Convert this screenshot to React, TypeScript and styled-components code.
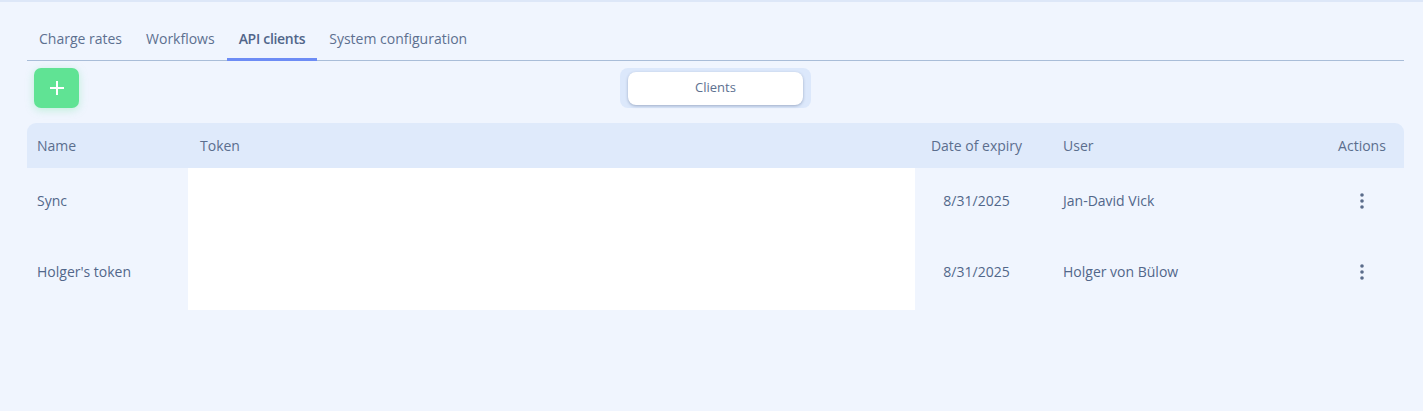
import React from "react";
import styled, { createGlobalStyle } from "styled-components";

const Global = createGlobalStyle`
  html, body { margin: 0; padding: 0; }
  body {
    background: #f0f5fe;
    font-family: "Open Sans", "Noto Sans", sans-serif;
    color: #56698a;
  }
  * { box-sizing: border-box; }
`;

const Page = styled.div`
  min-height: 411px;
  border-top: 2px solid #dde7f8;
  padding: 16px 19px 0 27px;
`;

const TabBar = styled.nav`
  display: flex;
  border-bottom: 1px solid #a9bdd8;
`;

const Tab = styled.div<{ $active?: boolean }>`
  position: relative;
  padding: 11px 12px 11px;
  font-size: 14px;
  line-height: 20px;
  font-weight: ${(p) => (p.$active ? 600 : 400)};
  letter-spacing: ${(p) => (p.$active ? "-0.3px" : "0")};
  color: ${(p) => (p.$active ? "#51668a" : "#5d7090")};
  &::after {
    content: "";
    display: ${(p) => (p.$active ? "block" : "none")};
    position: absolute;
    left: 0;
    right: 0;
    bottom: -1px;
    height: 3px;
    background: #6d8cf5;
  }
`;

const Toolbar = styled.div`
  display: grid;
  grid-template-columns: 1fr auto 1fr;
  align-items: center;
  margin-top: 7px;
`;

const AddButton = styled.button`
  justify-self: start;
  margin-left: 7px;
  width: 45px;
  height: 40px;
  border: none;
  border-radius: 7px;
  background: #60e394;
  box-shadow: 0 2px 8px rgba(96, 227, 148, 0.35);
  display: flex;
  align-items: center;
  justify-content: center;
  padding: 0;
`;

const Segmented = styled.div`
  width: 191px;
  height: 40px;
  padding: 4px 8px 3px;
  border-radius: 8px;
  background: #dce8fb;
  display: flex;
`;

const Segment = styled.div`
  flex: 1;
  background: #fff;
  border-radius: 8px;
  box-shadow: 0 1px 3px rgba(40, 60, 100, 0.35);
  display: flex;
  align-items: center;
  justify-content: center;
  padding-bottom: 3px;
  font-size: 13px;
  color: #5d7090;
`;

const Table = styled.div`
  margin-top: 15px;
`;

const cols = "161px 727px 123px 1fr 84px";

const HeaderRow = styled.div`
  display: grid;
  grid-template-columns: ${cols};
  height: 45px;
  align-items: center;
  background: #dfeafb;
  border-radius: 9px 9px 0 0;
  font-size: 14px;
  color: #5b6e8e;
`;

const Row = styled.div`
  display: grid;
  grid-template-columns: ${cols};
  height: 71px;
  font-size: 14px;
  color: #52678a;
`;

const Cell = styled.div<{ $align?: "left" | "center"; $pad?: number; $white?: boolean }>`
  display: flex;
  align-items: center;
  justify-content: ${(p) => (p.$align === "center" ? "center" : "flex-start")};
  padding-left: ${(p) => (p.$align === "center" ? 0 : p.$pad ?? 10)}px;
  background: ${(p) => (p.$white ? "#ffffff" : "transparent")};
`;

const BodyCell = styled(Cell)`
  padding-bottom: 6px;
`;

const Kebab = styled.button`
  border: none;
  background: transparent;
  padding: 0;
  width: 16px;
  height: 18px;
  display: flex;
  align-items: center;
  justify-content: center;
`;

const PlusIcon = () => (
  <svg width="14" height="14" viewBox="0 0 14 14">
    <path d="M7 0v14M0 7h14" stroke="#fff" strokeWidth="2" strokeLinecap="butt" />
  </svg>
);

const DotsIcon = () => (
  <svg width="4" height="16" viewBox="0 0 4 16">
    <circle cx="2" cy="2" r="1.8" fill="#5a6c8a" />
    <circle cx="2" cy="8" r="1.8" fill="#5a6c8a" />
    <circle cx="2" cy="14" r="1.8" fill="#5a6c8a" />
  </svg>
);

const tabs = ["Charge rates", "Workflows", "API clients", "System configuration"];

const clients = [
  { name: "Sync", expiry: "8/31/2025", user: "Jan-David Vick" },
  { name: "Holger's token", expiry: "8/31/2025", user: "Holger von Bülow" },
];

export default function App() {
  return (
    <>
      <Global />
      <Page>
        <TabBar>
          {tabs.map((t) => (
            <Tab key={t} $active={t === "API clients"}>
              {t}
            </Tab>
          ))}
        </TabBar>
        <Toolbar>
          <AddButton aria-label="Add">
            <PlusIcon />
          </AddButton>
          <Segmented>
            <Segment>Clients</Segment>
          </Segmented>
          <div />
        </Toolbar>
        <Table>
          <HeaderRow>
            <Cell>Name</Cell>
            <Cell $pad={12}>Token</Cell>
            <Cell $align="center">Date of expiry</Cell>
            <Cell $pad={25}>User</Cell>
            <Cell $align="center">Actions</Cell>
          </HeaderRow>
          {clients.map((c) => (
            <Row key={c.name}>
              <BodyCell>{c.name}</BodyCell>
              <BodyCell $white />
              <BodyCell $align="center">{c.expiry}</BodyCell>
              <BodyCell $pad={25}>{c.user}</BodyCell>
              <BodyCell $align="center">
                <Kebab aria-label="Actions">
                  <DotsIcon />
                </Kebab>
              </BodyCell>
            </Row>
          ))}
        </Table>
      </Page>
    </>
  );
}
